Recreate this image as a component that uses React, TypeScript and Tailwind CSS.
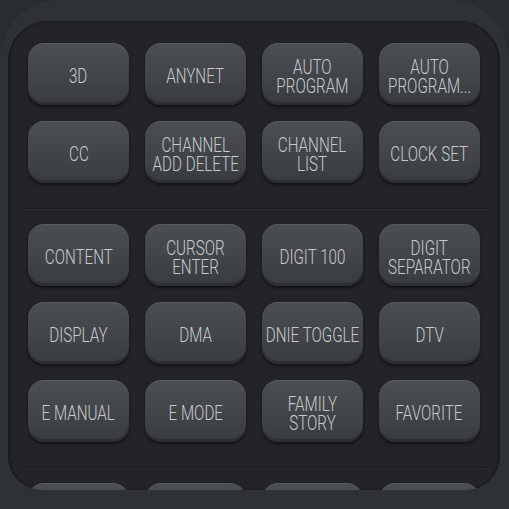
import React from 'react'

const sections: string[][] = [
  ['3D', 'ANYNET', 'AUTO\nPROGRAM', 'AUTO\nPROGRAM...', 'CC', 'CHANNEL\nADD DELETE', 'CHANNEL\nLIST', 'CLOCK SET'],
  [
    'CONTENT',
    'CURSOR\nENTER',
    'DIGIT 100',
    'DIGIT\nSEPARATOR',
    'DISPLAY',
    'DMA',
    'DNIE TOGGLE',
    'DTV',
    'E MANUAL',
    'E MODE',
    'FAMILY\nSTORY',
    'FAVORITE',
  ],
  // next group, only the tops peek out under the bottom bar
  ['', '', '', ''],
]

function RemoteKey({ label }: { label: string }) {
  return (
    <button className="h-[62px] pt-[5px] rounded-[16px] bg-gradient-to-b from-[#4b4f53] to-[#393c3f] shadow-[0_2px_3px_rgba(0,0,0,0.55),inset_0_-3px_0_rgba(0,0,0,0.22),inset_0_1px_0_rgba(255,255,255,0.07)] flex items-center justify-center text-center text-[#c8cbce] text-[20px] font-light leading-[19px] [font-family:Roboto,'DejaVu_Sans',sans-serif]">
      <span className="inline-block scale-x-[0.76] whitespace-pre">{label}</span>
    </button>
  )
}

export default function App() {
  return (
    <div className="w-[509px] h-[509px] bg-[#2a2d30] overflow-hidden">
      <div className="h-full rounded-t-[60px] bg-[#2f3235] pt-[21px] px-[8px]">
        <div className="h-[469px] w-[492px] overflow-hidden rounded-t-[40px] rounded-b-[34px] bg-[#222427] shadow-[inset_2px_0_2px_rgba(0,0,0,0.25),inset_-2px_0_2px_rgba(0,0,0,0.25)] pt-[22px]">
          {sections.map((keys, i) => (
            <div key={i}>
              {i > 0 && (
                <div className="mx-[14px] mt-[25px] mb-[14px] h-[2px] bg-[#1a1c1e] border-b border-[#2a2c2f]" />
              )}
              <div className="grid grid-cols-4 gap-[16px] px-[20px]">
                {keys.map((k, j) => (
                  <RemoteKey key={j} label={k} />
                ))}
              </div>
            </div>
          ))}
        </div>
      </div>
    </div>
  )
}
